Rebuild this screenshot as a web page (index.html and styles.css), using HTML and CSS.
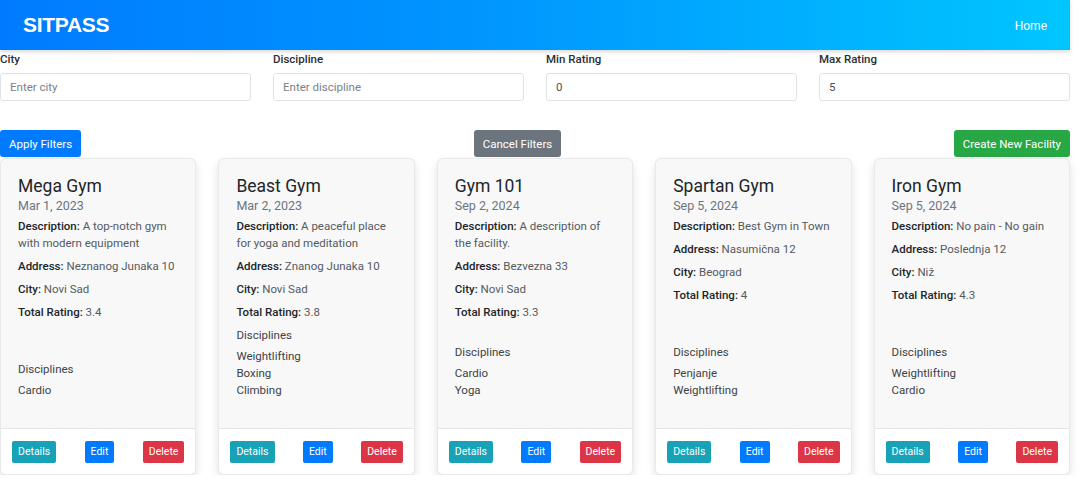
FILE: index.html
```html
<!DOCTYPE html>
<html lang="en">
<head>
<meta charset="utf-8">
<title>SITPASS</title>
<link rel="stylesheet" href="styles.css">
</head>
<body>
<div class="page">
  <header class="navbar">
    <div class="brand">SITPASS</div>
    <a class="nav-link" href="#">Home</a>
  </header>

  <section class="filters">
    <div class="field">
      <label>City</label>
      <input class="input" type="text" placeholder="Enter city">
    </div>
    <div class="field">
      <label>Discipline</label>
      <input class="input" type="text" placeholder="Enter discipline">
    </div>
    <div class="field">
      <label>Min Rating</label>
      <input class="input" type="text" value="0">
    </div>
    <div class="field">
      <label>Max Rating</label>
      <input class="input" type="text" value="5">
    </div>
  </section>

  <div class="actions">
    <button class="btn btn-primary">Apply Filters</button>
    <button class="btn btn-secondary">Cancel Filters</button>
    <button class="btn btn-success">Create New Facility</button>
  </div>

  <section class="cards">
    <article class="card">
      <div class="card-body">
        <h4 class="card-title">Mega Gym</h4>
        <div class="card-date">Mar 1, 2023</div>
        <p><b>Description:</b> A top-notch gym with modern equipment</p>
        <p><b>Address:</b> Neznanog Junaka 10</p>
        <p><b>City:</b> Novi Sad</p>
        <p><b>Total Rating:</b> 3.4</p>
        <div class="disciplines">
          <div class="disc-title">Disciplines</div>
          <ul><li>Cardio</li></ul>
        </div>
      </div>
      <div class="card-footer">
        <button class="btn-sm btn-info">Details</button>
        <button class="btn-sm btn-primary">Edit</button>
        <button class="btn-sm btn-danger">Delete</button>
      </div>
    </article>

    <article class="card">
      <div class="card-body">
        <h4 class="card-title">Beast Gym</h4>
        <div class="card-date">Mar 2, 2023</div>
        <p><b>Description:</b> A peaceful place for yoga and meditation</p>
        <p><b>Address:</b> Znanog Junaka 10</p>
        <p><b>City:</b> Novi Sad</p>
        <p><b>Total Rating:</b> 3.8</p>
        <div class="disciplines">
          <div class="disc-title">Disciplines</div>
          <ul><li>Weightlifting</li><li>Boxing</li><li>Climbing</li></ul>
        </div>
      </div>
      <div class="card-footer">
        <button class="btn-sm btn-info">Details</button>
        <button class="btn-sm btn-primary">Edit</button>
        <button class="btn-sm btn-danger">Delete</button>
      </div>
    </article>

    <article class="card">
      <div class="card-body">
        <h4 class="card-title">Gym 101</h4>
        <div class="card-date">Sep 2, 2024</div>
        <p><b>Description:</b> A description of the facility.</p>
        <p><b>Address:</b> Bezvezna 33</p>
        <p><b>City:</b> Novi Sad</p>
        <p><b>Total Rating:</b> 3.3</p>
        <div class="disciplines">
          <div class="disc-title">Disciplines</div>
          <ul><li>Cardio</li><li>Yoga</li></ul>
        </div>
      </div>
      <div class="card-footer">
        <button class="btn-sm btn-info">Details</button>
        <button class="btn-sm btn-primary">Edit</button>
        <button class="btn-sm btn-danger">Delete</button>
      </div>
    </article>

    <article class="card">
      <div class="card-body">
        <h4 class="card-title">Spartan Gym</h4>
        <div class="card-date">Sep 5, 2024</div>
        <p><b>Description:</b> Best Gym in Town</p>
        <p><b>Address:</b> Nasumična 12</p>
        <p><b>City:</b> Beograd</p>
        <p><b>Total Rating:</b> 4</p>
        <div class="disciplines">
          <div class="disc-title">Disciplines</div>
          <ul><li>Penjanje</li><li>Weightlifting</li></ul>
        </div>
      </div>
      <div class="card-footer">
        <button class="btn-sm btn-info">Details</button>
        <button class="btn-sm btn-primary">Edit</button>
        <button class="btn-sm btn-danger">Delete</button>
      </div>
    </article>

    <article class="card">
      <div class="card-body">
        <h4 class="card-title">Iron Gym</h4>
        <div class="card-date">Sep 5, 2024</div>
        <p><b>Description:</b> No pain - No gain</p>
        <p><b>Address:</b> Poslednja 12</p>
        <p><b>City:</b> Niž</p>
        <p><b>Total Rating:</b> 4.3</p>
        <div class="disciplines">
          <div class="disc-title">Disciplines</div>
          <ul><li>Weightlifting</li><li>Cardio</li></ul>
        </div>
      </div>
      <div class="card-footer">
        <button class="btn-sm btn-info">Details</button>
        <button class="btn-sm btn-primary">Edit</button>
        <button class="btn-sm btn-danger">Delete</button>
      </div>
    </article>
  </section>
</div>
</body>
</html>
```

FILE: styles.css
```css
* { box-sizing: border-box; }

body {
  margin: 0;
  background: #ffffff;
  font-family: Roboto, "Noto Sans", Arial, sans-serif;
  color: #212529;
}

.page {
  width: 1070px;
}

.navbar {
  height: 50px;
  display: flex;
  align-items: center;
  justify-content: space-between;
  padding: 0 22px 0 23px;
  background: linear-gradient(90deg, #007bff 0%, #0096fe 45%, #00c6ff 100%);
  box-shadow: 0 2px 4px rgba(0, 0, 0, 0.15);
  position: relative;
  z-index: 1;
}

.brand {
  font-family: "Liberation Sans", Arial, sans-serif;
  font-weight: 700;
  font-size: 21px;
  letter-spacing: -0.3px;
  color: #ffffff;
}

.nav-link {
  color: #ffffff;
  font-size: 12px;
  text-decoration: none;
  margin-top: 1px;
  margin-right: 1px;
}

.filters {
  display: grid;
  grid-template-columns: repeat(4, 1fr);
  column-gap: 22px;
  padding-top: 1px;
}

.field label {
  display: block;
  font-size: 11.5px;
  font-weight: 500;
  line-height: 17px;
  margin-bottom: 5px;
  color: #2a2e33;
}

.input {
  display: block;
  width: 100%;
  height: 28px;
  border: 1px solid #dfe3e7;
  border-radius: 3px;
  padding: 0 9px;
  font-family: Roboto, Arial, sans-serif;
  font-size: 11.5px;
  color: #495057;
  background: #ffffff;
  outline: none;
}

.input::placeholder {
  color: #7a8188;
}

.actions {
  display: flex;
  justify-content: space-between;
  margin-top: 29px;
}

.btn {
  height: 27px;
  border: none;
  border-radius: 3px;
  padding: 0 9px;
  font-family: Roboto, Arial, sans-serif;
  font-size: 11.5px;
  color: #ffffff;
}

.btn-primary { background: #007bff; color: #fff; }
.btn-secondary { background: #6c757d; }
.btn-success { background: #28a745; }
.btn-info { background: #17a2b8; color: #fff; }
.btn-danger { background: #dc3545; color: #fff; }

.cards {
  display: grid;
  grid-template-columns: repeat(5, 1fr);
  column-gap: 22px;
  align-items: stretch;
  padding-top: 1px;
}

.card {
  display: flex;
  flex-direction: column;
  background: #f8f8f8;
  border: 1px solid rgba(0, 0, 0, 0.06);
  border-radius: 6px;
  box-shadow: 0 4px 9px rgba(0, 0, 0, 0.12);
  overflow: hidden;
}

.card-body {
  flex: 1;
  display: flex;
  flex-direction: column;
  padding: 15px 17px 0 17px;
}

.card-title {
  margin: 0;
  font-size: 17.5px;
  font-weight: 400;
  line-height: 22px;
  color: #212529;
  padding-top: 1px;
}

.card-date {
  font-size: 12.5px;
  color: #6c757d;
  line-height: 18px;
  margin-bottom: 3px;
}

.card-body p {
  margin: 0 0 6px 0;
  font-size: 11.5px;
  line-height: 17px;
  color: #555a5f;
}

.card-body p b {
  font-weight: 500;
  color: #212529;
}

.disciplines {
  margin-top: auto;
  padding-bottom: 29px;
  font-size: 11.5px;
  line-height: 17px;
  color: #3d4246;
}

.disc-title {
  margin-bottom: 4px;
}

.disciplines ul {
  list-style: none;
  margin: 0;
  padding: 0;
}

.card-footer {
  display: flex;
  justify-content: space-between;
  align-items: center;
  height: 46px;
  padding: 0 11px;
  background: #ffffff;
  border-top: 1px solid #e6e6e6;
}

.btn-sm {
  height: 22px;
  border: none;
  border-radius: 2px;
  padding: 0 6px;
  font-family: Roboto, Arial, sans-serif;
  font-size: 10.5px;
}
```
